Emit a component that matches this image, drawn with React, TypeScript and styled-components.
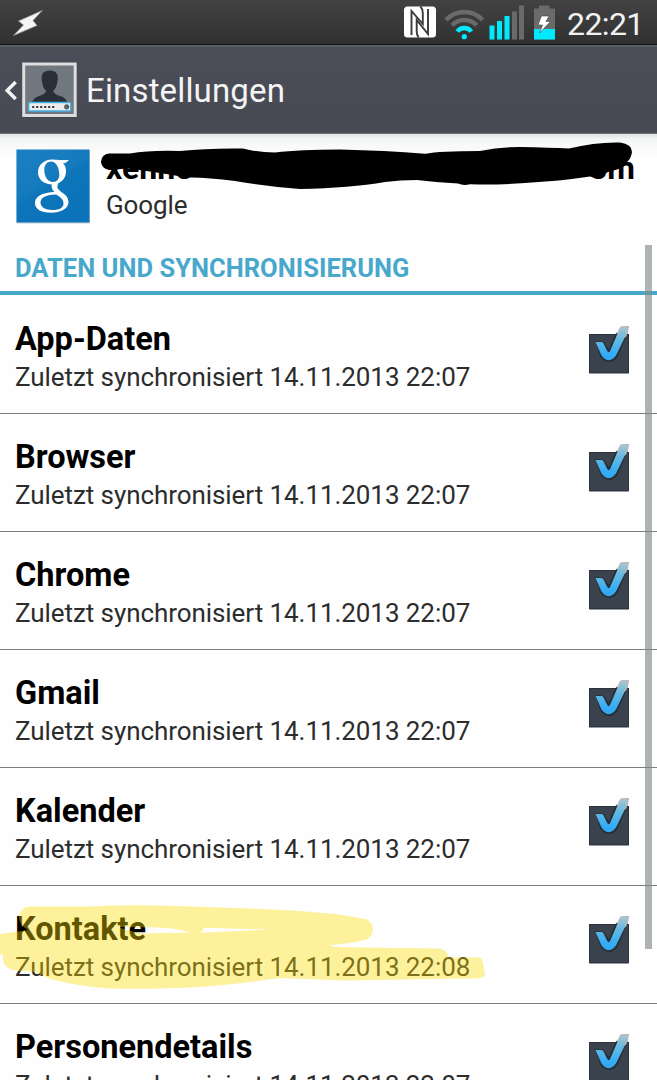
import React from 'react';
import styled, { createGlobalStyle } from 'styled-components';

const GlobalStyle = createGlobalStyle`
  html, body { margin: 0; padding: 0; background: #fefefe; overflow: hidden; }
  * { box-sizing: border-box; }
`;

const Screen = styled.div`
  position: relative;
  display: flex;
  flex-direction: column;
  width: 657px;
  height: 1080px;
  overflow: hidden;
  background: #fefefe;
  font-family: Roboto, 'Liberation Sans', sans-serif;
  color: #000;
  white-space: nowrap;
`;

const StatusBar = styled.header`
  flex: none;
  display: flex;
  align-items: flex-start;
  justify-content: space-between;
  height: 45px;
  padding: 0 15px 0 12px;
  background: linear-gradient(#434143, #3b3a3b 50%, #303130);
  border-bottom: 1px solid #111;
`;

const StatusIcons = styled.div`
  display: flex;
  align-items: flex-start;
`;

const Clock = styled.time`
  width: 75px;
  margin-left: 10px;
  font-size: 32px;
  font-weight: 400;
  line-height: 48px;
  letter-spacing: -0.6px;
  color: #f2f2f2;
`;

const ActionBar = styled.nav`
  flex: none;
  display: flex;
  align-items: center;
  height: 89px;
  padding-left: 4px;
  border-top: 2px solid #5b5f69;
  border-bottom: 1px solid #6e7177;
  background: linear-gradient(#4b4e58, #474a53);
`;

const BarTitle = styled.h1`
  margin: 2px 0 0 9px;
  font-size: 33px;
  font-weight: 400;
  line-height: 40px;
  letter-spacing: 0.15px;
  color: #f4f4f4;
`;

const Account = styled.section`
  position: relative;
  flex: none;
  display: flex;
  height: 111px;
  padding: 15px 22px 0 16px;
  background: linear-gradient(#dde1e1, #f5f6f6 5px, #fefefe 24px);
`;

const AccountText = styled.div`
  flex: 1;
  display: flex;
  flex-direction: column;
  margin-left: 16px;
`;

const Address = styled.div`
  display: flex;
  justify-content: space-between;
  font-size: 32px;
  font-weight: 700;
  line-height: 38px;
`;

const Provider = styled.div`
  font-size: 26px;
  line-height: 36px;
  letter-spacing: -0.1px;
  color: #2b2d2d;
`;

const Scribble = styled.svg`
  position: absolute;
  left: 0;
  top: 0;
  pointer-events: none;
`;

const SectionTitle = styled.h2`
  flex: none;
  height: 50px;
  margin: 0;
  padding: 4px 15px 0;
  border-bottom: 4px solid #48a8cb;
  font-size: 25.5px;
  font-weight: 700;
  line-height: 39px;
  letter-spacing: 0.03px;
  color: #48a8cb;
`;

const List = styled.div`
  flex: none;
  padding-top: 1px;
`;

const Row = styled.div`
  position: relative;
  display: flex;
  justify-content: space-between;
  height: 118px;
  padding: 24px 28px 0 15px;
  border-bottom: 1px solid #7b7e82;
`;

const RowTitle = styled.div`
  font-size: 32.5px;
  font-weight: 700;
  line-height: 38px;
`;

const RowSub = styled.div`
  font-size: 26px;
  line-height: 39px;
  letter-spacing: -0.07px;
  color: #2b2d2d;
`;

const Highlight = styled.svg`
  position: absolute;
  left: 0;
  top: 0;
  z-index: 1;
`;

const CheckBox = styled.svg`
  flex: none;
  margin-top: 5px;
`;

const ScrollThumb = styled.div`
  position: absolute;
  top: 245px;
  right: 5px;
  width: 7px;
  height: 704px;
  background: rgba(130, 136, 136, 0.64);
  z-index: 2;
`;

const Check = () => (
  <CheckBox width="40" height="50" viewBox="0 0 40 50" overflow="visible">
    <defs>
      <linearGradient id="tick" x1="0" y1="0" x2="0" y2="1">
        <stop offset="0" stopColor="#a9c6d2" />
        <stop offset="0.4" stopColor="#62b8e2" />
        <stop offset="0.8" stopColor="#35adf6" />
        <stop offset="1" stopColor="#32a4ec" />
      </linearGradient>
    </defs>
    <rect y="9" width="40" height="39.300" fill="#3a424d" />
    <path d="M0.500 9.500H39.500V47.800H0.500Z" fill="none" stroke="#2b323b" />
    <path
      d="M8 17.500L12.500 31Q19.700 40 27 32L37 9H28L20 27L14 18Z"
      fill="#1f242a"
      stroke="#1f242a"
      strokeWidth="2.500"
      opacity="0.700"
    />
    <path
      d="M6.500 17H12.500Q14 17 14.600 18.500L18 25.500Q19.700 28.800 21.300 25.500L30.500 4Q31.500 1.700 33.500 1.700H39.500L38.500 7L27 30.500Q19.700 40 12.500 30.500Z"
      fill="url(#tick)"
    />
    <path d="M29 8L31 3.500Q31.800 1.700 33.500 1.700H39.300L38.200 7.500L36 12" fill="none" stroke="#b9bbbc" strokeWidth="1.500" />
  </CheckBox>
);

const Bolt = () => (
  <svg width="32" height="45" viewBox="12 0 32 45">
    <path d="M42.300 10.500L18.500 21L23.500 25L13.500 35.500L37 25.500L33 20.500Z" fill="#f5f5f5" stroke="#999" strokeWidth="0.700" />
  </svg>
);

const Signals = () => (
  <svg width="154" height="44" viewBox="403 0 154 44">
    <rect x="404" y="6.500" width="32" height="31" rx="3.500" fill="#fff" />
    <g fill="none" stroke="#3a3a3a" strokeWidth="1.900">
      <path d="M411.500 35V11L422.800 24V13Q422.800 9 420.500 6.500" />
      <path d="M418.500 37.500Q416.700 35 416.700 31V20L428 34V9" />
    </g>
    <g fill="none" stroke="#6a6a6a" strokeWidth="4.500">
      <path d="M446 20A24.700 24.700 0 0 1 482.600 20" />
      <path d="M452 25.300A16.800 16.800 0 0 1 476.600 25.300" />
      <path d="M457.300 31.500A8.700 8.700 0 0 1 471.300 31.500" stroke="#00eaff" />
    </g>
    <circle cx="464.300" cy="36.700" r="2.600" fill="#00eaff" />
    <g fill="#00eaff">
      <rect x="489.500" y="25.500" width="5" height="14" />
      <rect x="497" y="21" width="5" height="18.500" />
      <rect x="504.500" y="16" width="5" height="23.500" />
    </g>
    <g fill="#6a6a6a">
      <rect x="512" y="11.500" width="5" height="28" />
      <rect x="519" y="5.500" width="5" height="34" />
      <path d="M534 8.500H539V5.500H549.500V8.500H555V39.500H534Z" />
    </g>
    <rect x="534" y="29" width="21" height="10.500" fill="#00eaff" />
    <path d="M541.500 16H549L546 21.500H550.500L539.500 33L542.500 25H538Z" fill="#fff" stroke="#444" strokeWidth="0.600" />
  </svg>
);

const BackToSettings = () => (
  <svg width="73" height="56" viewBox="3.800 61.500 73 56">
    <path d="M15.500 81.500L7 90L15.500 98.500" fill="none" stroke="#f2f2f2" strokeWidth="3.500" />
    <rect x="22" y="62" width="54.500" height="55" fill="#3c3f46" />
    <rect x="23.500" y="63.500" width="51.500" height="51.500" fill="#717880" stroke="#dedede" strokeWidth="3" />
    <path
      d="M32 102Q33 97 39 95.500Q45 93.500 46 90.500Q42 87 42 81L41.500 80V76Q42 70 49.500 70Q57 70 57.500 76V80L57 82Q56.500 87 53 90.500Q54 94 60 95.500Q66 97 67 102Z"
      fill="#293039"
    />
    <rect x="28.500" y="102" width="42" height="8.500" rx="1" fill="#ececec" stroke="#46b1e6" strokeWidth="1.400" />
    <path d="M32 106.500H54" stroke="#333" strokeWidth="2" strokeDasharray="2 2" />
    <circle cx="66.500" cy="106.300" r="2.600" fill="#59616b" />
  </svg>
);

const GoogleMark = () => (
  <svg width="74" height="75" viewBox="0 0 74 75">
    <defs>
      <linearGradient id="blue" x1="0" y1="0" x2="0.6" y2="1">
        <stop offset="0" stopColor="#1a80c2" />
        <stop offset="0.5" stopColor="#157bbf" />
        <stop offset="0.56" stopColor="#0d75ba" />
        <stop offset="1" stopColor="#0b74ba" />
      </linearGradient>
    </defs>
    <rect x="0.500" y="1.500" width="73.500" height="73" fill="#c9d0d4" />
    <rect x="0.500" y="0.500" width="73" height="73" fill="url(#blue)" />
    <g fill="#fff" fillRule="evenodd">
      <path d="M36 10.500Q41 10.500 44 11H53L49.500 14H47Q50 17 50 22.500C50 30 44 35.500 36.500 35.500C28 35.500 22 30.500 22 23.500C22 16 28 10.500 36 10.500ZM35 12.500C31 12.500 28.300 16 28.300 21C28.300 28 32 33 37 33C41 33 43.300 30 43.300 25.500C43.300 18.500 40 12.500 35 12.500Z" />
      <path d="M36 34.500L42.500 33.500Q41 37 41.500 39Q42.500 41 46 43.500Q52.500 47.500 52.500 53C52.500 59.500 45 63.800 35 63.800C25 63.800 19 60 19 54C19 47 27 43.500 38.500 43Q34.500 39.500 36 34.500ZM40 45.500C29 46 24.500 49 24.500 53.500C24.500 58 29 61 36.500 61C44 61 47.500 58.500 47.500 54.500C47.500 50.500 45 48.500 40 45.500Z" />
    </g>
  </svg>
);

const Redaction = () => (
  <Scribble width="657" height="70" viewBox="0 134 657 70">
    <path
      d="M109 153.500H130Q150 150 180 151Q208 148 243 148.500Q258 152.500 275 152.500Q300 149.500 340 149.500Q385 150.500 425 153.800Q440 151 480 151Q500 147 520 147Q550 147.500 569 148.500Q595 142 620 142.500Q632 144 632 152Q631 159 627 162Q625 168 612 171Q605 172 602 177Q596 179 590 176.500Q560 181 525 183Q500 185 470 184.300Q463 186 458 183.500Q435 182 417 180Q400 180 385 182Q350 188 300 189Q270 187 235 181Q205 177 187 177.500Q150 171 127 168.500L109 170Q101 168 101 161.500Q102 154 109 153.500Z"
      fill="#000"
    />
  </Scribble>
);

const Marker = () => (
  <Highlight width="657" height="117" viewBox="0 887 657 117">
    <path
      fillRule="evenodd"
      fill="rgba(255, 221, 0, 0.385)"
      d="M0 935L15 933L28 931Q19 926 19 918Q20 908 30 907.500L90 907.500Q125 905.500 160 906.500L250 909.500Q300 911 340 915.500Q355 918 366 920Q373 924 373 930Q372 939 365 941Q350 944 329 946.500Q333 948 345 948.300L440 949.500Q447 951 449 958.500L480 958.500Q483 959 485 977Q482 980 465 979.500L345 981.500L280 979Q230 986 200 988Q150 990.500 110 989.500Q75 987 50 980Q35 972 27 972Q3 973 3 960V956L0 955ZM117 928L160 928.500Q178 929.500 190 933.500L140 934.500ZM204 928.800L270 930.500L200 933.800Q203 932 204 928.800Z"
    />
  </Highlight>
);

const services = [
  { name: 'App-Daten', time: '22:07' },
  { name: 'Browser', time: '22:07' },
  { name: 'Chrome', time: '22:07' },
  { name: 'Gmail', time: '22:07' },
  { name: 'Kalender', time: '22:07' },
  { name: 'Kontakte', time: '22:08', marked: true },
  { name: 'Personendetails', time: '22:07' },
];

export default function App() {
  return (
    <Screen>
      <GlobalStyle />
      <StatusBar>
        <Bolt />
        <StatusIcons>
          <Signals />
          <Clock>22:21</Clock>
        </StatusIcons>
      </StatusBar>
      <ActionBar>
        <BackToSettings />
        <BarTitle>Einstellungen</BarTitle>
      </ActionBar>
      <Account>
        <GoogleMark />
        <AccountText>
          <Address>
            <span>xenno</span>
            <span>om</span>
          </Address>
          <Provider>Google</Provider>
        </AccountText>
        <Redaction />
      </Account>
      <SectionTitle>DATEN UND SYNCHRONISIERUNG</SectionTitle>
      <List>
        {services.map((s) => (
          <Row key={s.name}>
            <div>
              <RowTitle>{s.name}</RowTitle>
              <RowSub>Zuletzt synchronisiert 14.11.2013 {s.time}</RowSub>
            </div>
            <Check />
            {s.marked && <Marker />}
          </Row>
        ))}
      </List>
      <ScrollThumb />
    </Screen>
  );
}
